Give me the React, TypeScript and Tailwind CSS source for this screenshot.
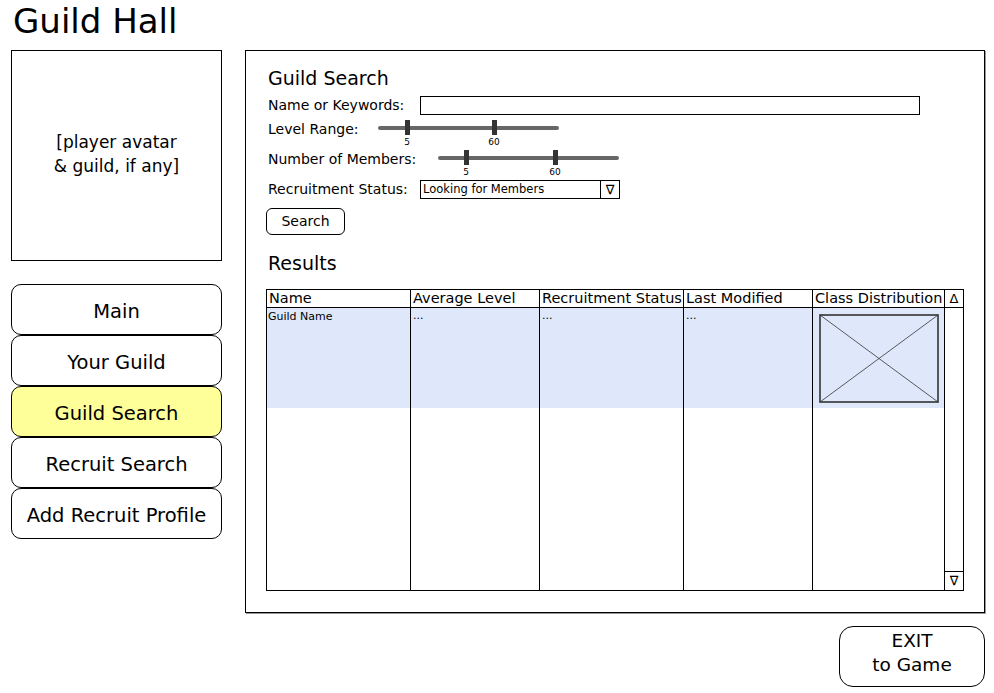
import React from "react";

function Slider({ a, b }: { a: number; b: number }) {
  return (
    <svg width={182} height={28} className="block">
      <line x1={2} y1={8} x2={179} y2={8} stroke="#666" strokeWidth={4} strokeLinecap="round" />
      <rect x={a - 2} y={0} width={5} height={15} fill="#333" />
      <rect x={b - 2} y={0} width={5} height={15} fill="#333" />
      <text x={a} y={25} fontSize={9} textAnchor="middle" fontFamily="DejaVu Sans" fill="#000">5</text>
      <text x={b} y={25} fontSize={9} textAnchor="middle" fontFamily="DejaVu Sans" fill="#000">60</text>
    </svg>
  );
}

function NavBtn({ label, active }: { label: string; active?: boolean }) {
  return (
    <div
      className={`h-[51px] w-[211px] rounded-[10px] border border-black flex items-center justify-center pt-[4px] text-[19.5px] text-black ${
        active ? "bg-[#ffff99]" : "bg-white"
      }`}
    >
      {label}
    </div>
  );
}

function Col({
  w,
  title,
  children,
  last,
}: {
  w: number;
  title: string;
  children?: React.ReactNode;
  last?: boolean;
}) {
  return (
    <div className={`flex flex-col h-full ${last ? "" : "border-r border-black"}`} style={{ width: w }}>
      <div className="h-[18px] border-b border-black text-[14.5px] leading-[17px] pl-[2px] whitespace-nowrap overflow-hidden">
        {title}
      </div>
      <div className="h-[100px] bg-[#dee8fa]">{children}</div>
    </div>
  );
}

export default function App() {
  return (
    <div className="w-[994px] h-[693px] bg-white text-black font-['DejaVu_Sans',sans-serif] overflow-hidden">
      <div className="h-[50px] pl-[13px] pt-[1px]">
        <div className="text-[34px] leading-[40px]">Guild Hall</div>
      </div>
      <div className="flex pl-[11px]">
        <div className="flex flex-col w-[211px]">
          <div className="h-[211px] border border-black flex items-center justify-center text-center text-[17px] leading-[24px] pb-[4px]">
            <div>
              [player avatar
              <br />& guild, if any]
            </div>
          </div>
          <div className="mt-[23px] flex flex-col">
            <NavBtn label="Main" />
            <NavBtn label="Your Guild" />
            <NavBtn label="Guild Search" active />
            <NavBtn label="Recruit Search" />
            <NavBtn label="Add Recruit Profile" />
          </div>
        </div>
        <div className="flex flex-col ml-[23px]">
          <div className="w-[740px] h-[563px] border border-black shadow-[1px_1px_0_#999] pl-[20px] pt-[15px] flex flex-col">
            <div className="text-[19px] leading-[24px] pl-[2px]">Guild Search</div>
            <div className="flex items-center mt-[6px] h-[19px]">
              <div className="w-[154px] pl-[2px] text-[14px]">Name or Keywords:</div>
              <div className="w-[500px] h-[19px] border border-black" />
            </div>
            <div className="flex items-start mt-[5px] h-[28px]">
              <div className="w-[112px] pl-[2px] text-[14px] leading-[18px]">Level Range:</div>
              <Slider a={29} b={116} />
            </div>
            <div className="flex items-start mt-[2px] h-[28px]">
              <div className="w-[172px] pl-[2px] text-[14px] leading-[18px]">Number of Members:</div>
              <Slider a={28} b={117} />
            </div>
            <div className="flex items-center mt-[2px] h-[19px]">
              <div className="w-[154px] pl-[2px] text-[14px]">Recruitment Status:</div>
              <div className="w-[200px] h-[19px] border border-black flex">
                <div className="flex-1 text-[11.5px] leading-[17px] pl-[2px]">Looking for Members</div>
                <div className="w-[19px] border-l border-black text-[13px] leading-[17px] text-center">∇</div>
              </div>
            </div>
            <div className="mt-[9px] w-[79px] h-[27px] border border-black rounded-[6px] flex items-center justify-center text-[14px]">
              Search
            </div>
            <div className="mt-[16px] text-[19px] leading-[24px] pl-[2px]">Results</div>
            <div className="mt-[14px] w-[698px] h-[302px] border border-black flex">
              <Col w={144} title="Name">
                <div className="text-[11px] leading-[14px] pl-[1px] pt-[2px]">Guild Name</div>
              </Col>
              <Col w={129} title="Average Level">
                <div className="text-[11px] leading-[14px] pl-[2px] pt-[1px]">...</div>
              </Col>
              <Col w={144} title="Recruitment Status">
                <div className="text-[11px] leading-[14px] pl-[2px] pt-[1px]">...</div>
              </Col>
              <Col w={129} title="Last Modified">
                <div className="text-[11px] leading-[14px] pl-[2px] pt-[1px]">...</div>
              </Col>
              <Col w={132} title="Class Distribution">
                <div className="pl-[6px] pt-[6px]">
                  <svg width={120} height={89} className="block">
                    <rect x={1} y={1} width={118} height={87} fill="none" stroke="#333" strokeWidth={1.6} />
                    <line x1={1} y1={1} x2={119} y2={88} stroke="#333" strokeWidth={0.8} />
                    <line x1={119} y1={1} x2={1} y2={88} stroke="#333" strokeWidth={0.8} />
                  </svg>
                </div>
              </Col>
              <div className="w-[18px] h-full flex flex-col">
                <div className="h-[18px] border-b border-black text-[13px] leading-[18px] text-center">Δ</div>
                <div className="flex-1" />
                <div className="h-[19px] border-t border-black text-[13px] leading-[18px] text-center">∇</div>
              </div>
            </div>
          </div>
          <div className="flex justify-end mt-[13px]">
            <div className="w-[146px] h-[61px] border border-black rounded-[14px] flex items-center justify-center text-center text-[18.5px] leading-[24px] pb-[8px]">
              <div>
                EXIT
                <br />
                to Game
              </div>
            </div>
          </div>
        </div>
      </div>
    </div>
  );
}
